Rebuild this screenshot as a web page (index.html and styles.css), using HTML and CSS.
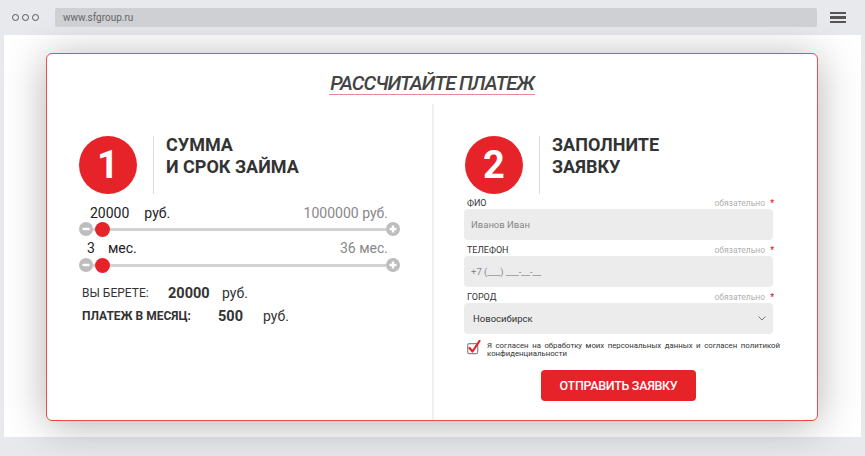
FILE: index.html
```html
<!DOCTYPE html>
<html lang="ru">
<head>
 <meta charset="utf-8">
 <title>SF Group — рассчитайте платеж</title>
 <link rel="stylesheet" href="styles.css">
</head>
<body>

 <div class="browser-bar">
 <div class="dots"><span></span><span></span><span></span></div>
 <div class="url">www.sfgroup.ru</div>
 <div class="burger"><span></span><span></span><span></span></div>
 </div>

 <div class="page">
 <div class="card">
 <div class="card-head">
 <h1 class="title">РАССЧИТАЙТЕ ПЛАТЕЖ</h1>
 </div>

 <div class="cols">
 <div class="col col-left">
 <div class="step">
 <div class="step-num">1</div>
 <div class="step-line"></div>
 <div class="step-title">СУММА<br>И СРОК ЗАЙМА</div>
 </div>

 <div class="slider">
 <div class="slider-labels">
 <span class="slider-val val-sum">20000</span>
 <span class="slider-unit unit-sum">руб.</span>
 <span class="slider-max">1000000 руб.</span>
 </div>
 <div class="slider-row">
 <svg class="slider-btn" width="14" height="14" viewBox="0 0 14 14"><circle cx="7" cy="7" r="7" fill="#bdbdbd"/><rect x="3.5" y="5.8" width="7" height="2.4" fill="#fff"/></svg>
 <div class="track"><span class="thumb"></span></div>
 <svg class="slider-btn" width="14" height="14" viewBox="0 0 14 14"><circle cx="7" cy="7" r="7" fill="#bdbdbd"/><rect x="3.5" y="5.8" width="7" height="2.4" fill="#fff"/><rect x="5.8" y="3.5" width="2.4" height="7" fill="#fff"/></svg>
 </div>
 </div>

 <div class="slider slider-term">
 <div class="slider-labels">
 <span class="slider-val val-term">3</span>
 <span class="slider-unit unit-term">мес.</span>
 <span class="slider-max">36 мес.</span>
 </div>
 <div class="slider-row">
 <svg class="slider-btn" width="14" height="14" viewBox="0 0 14 14"><circle cx="7" cy="7" r="7" fill="#bdbdbd"/><rect x="3.5" y="5.8" width="7" height="2.4" fill="#fff"/></svg>
 <div class="track"><span class="thumb"></span></div>
 <svg class="slider-btn" width="14" height="14" viewBox="0 0 14 14"><circle cx="7" cy="7" r="7" fill="#bdbdbd"/><rect x="3.5" y="5.8" width="7" height="2.4" fill="#fff"/><rect x="5.8" y="3.5" width="2.4" height="7" fill="#fff"/></svg>
 </div>
 </div>

 <div class="summary">
 <div class="sum-row">
 <span class="sum-label">ВЫ БЕРЕТЕ:</span>
 <span class="sum-val">20000</span>
 <span class="sum-unit">руб.</span>
 </div>
 <div class="sum-row sum-row-pay">
 <span class="sum-label">ПЛАТЕЖ В МЕСЯЦ:</span>
 <span class="sum-val">500</span>
 <span class="sum-unit">руб.</span>
 </div>
 </div>
 </div>

 <div class="col col-right">
 <div class="step">
 <div class="step-num">2</div>
 <div class="step-line"></div>
 <div class="step-title">ЗАПОЛНИТЕ<br>ЗАЯВКУ</div>
 </div>

 <form class="form">
 <div class="field field-first">
 <div class="field-head"><span class="field-name">ФИО</span><span class="field-req">обязательно <b>*</b></span></div>
 <input class="field-input" type="text" placeholder="Иванов Иван">
 </div>
 <div class="field">
 <div class="field-head"><span class="field-name">ТЕЛЕФОН</span><span class="field-req">обязательно <b>*</b></span></div>
 <input class="field-input" type="text" placeholder="+7 (___) ___-__-__">
 </div>
 <div class="field">
 <div class="field-head"><span class="field-name">ГОРОД</span><span class="field-req">обязательно <b>*</b></span></div>
 <div class="field-input field-select">
 <span>Новосибирск</span>
 <svg width="8" height="5" viewBox="0 0 8 5"><path d="M0.5 0.5 L4 4 L7.5 0.5" fill="none" stroke="#777" stroke-width="1"/></svg>
 </div>
 </div>

 <div class="agree">
 <svg class="agree-box" width="14" height="15" viewBox="0 0 14 15">
 <rect x="0.7" y="3.7" width="10" height="10" rx="1.5" fill="none" stroke="#888" stroke-width="1.2"/>
 <path d="M2.5 8 L5.5 11.5 L12.5 1" fill="none" stroke="#e52329" stroke-width="2.2" stroke-linecap="round" stroke-linejoin="round"/>
 </svg>
 <p class="agree-text">Я согласен на обработку моих персональных данных и согласен политикой конфиденциальности</p>
 </div>

 <div class="submit-wrap">
 <button class="submit-btn" type="button">ОТПРАВИТЬ ЗАЯВКУ</button>
 </div>
 </form>
 </div>
 </div>
 </div>
 </div>

</body>
</html>
```

FILE: styles.css
```css
body {
 margin: 0;
 padding: 0;
 background: #e8e9ec;
 font-family: Roboto, "Noto Sans", Arial, sans-serif;
 color: #333;
 width: 865px;
 height: 456px;
 overflow: hidden;
}

/* browser chrome */
.browser-bar {
 height: 35px;
 display: flex;
 align-items: center;
}

.dots {
 display: flex;
 gap: 3px;
 margin-left: 12px;
 width: 43px;
}

.dots span {
 width: 5px;
 height: 5px;
 border: 1.6px solid #555;
 border-radius: 50%;
}

.url {
 width: 762px;
 height: 19px;
 margin-top: -1px;
 background: #ced0d4;
 border-radius: 2px;
 font-size: 10px;
 line-height: 19px;
 color: #666;
 padding-left: 8px;
 box-sizing: border-box;
}

.burger {
 margin-left: 13px;
 display: flex;
 flex-direction: column;
 gap: 2px;
}

.burger span {
 width: 16px;
 height: 2.5px;
 background: #555;
}

/* page */
.page {
 margin: 0 4px;
 height: 402px;
 background: #fff;
 padding: 18px 0 0 42px;
 box-sizing: border-box;
}

.card {
 width: 772px;
 height: 368px;
 box-sizing: border-box;
 border: 1px solid #ee4a50;
 border-radius: 6px;
 background: #fff;
 box-shadow: 0 4px 42px rgba(0, 0, 0, 0.3);
 display: flex;
 flex-direction: column;
}

.card-head {
 height: 50px;
 padding-top: 18px;
 box-sizing: border-box;
 text-align: center;
}

.title {
 display: inline-block;
 margin: 0;
 font-size: 20px;
 line-height: 22px;
 font-style: italic;
 font-weight: 500;
 letter-spacing: -1px;
 color: #444;
 border-bottom: 1px solid #ec8a8e;
 padding: 0 1px;
}

.cols {
 flex: 1;
 display: flex;
}

.col-left {
 width: 385px;
 padding-left: 32px;
 box-sizing: border-box;
}

.col-right {
 flex: 1;
 border-left: 2px solid #f0f0f0;
 padding-left: 30px;
}

/* step header */
.step {
 display: flex;
 align-items: flex-start;
 margin-top: 32px;
}

.col-right .step {
 margin-left: 1px;
}

.step-num {
 width: 58px;
 height: 58px;
 border-radius: 50%;
 background: #e52329;
 color: #fff;
 font-size: 38px;
 font-weight: 700;
 line-height: 58px;
 text-align: center;
}

.step-line {
 width: 1px;
 height: 58px;
 background: #ddd;
 margin-left: 16px;
}

.step-title {
 margin-left: 12px;
 margin-top: -2px;
 font-size: 18px;
 line-height: 22px;
 font-weight: 700;
 color: #333;
}

/* sliders */
.slider {
 width: 321px;
 margin-top: 10px;
}

.slider-term {
 margin-top: 3px;
}

.slider-labels {
 display: flex;
 height: 18px;
 line-height: 18px;
 font-size: 14px;
 color: #222;
}

.slider-term .slider-labels {
 height: 19px;
}

.val-sum { margin-left: 11px; }
.unit-sum { margin-left: 15px; }
.val-term { margin-left: 8px; }
.unit-term { margin-left: 13px; }

.slider-max {
 margin-left: auto;
 margin-right: 12px;
 color: #888;
}

.slider-row {
 display: flex;
 align-items: center;
 height: 14px;
}

.track {
 flex: 1;
 height: 3px;
 background: #d2d2d2;
 position: relative;
}

.thumb {
 position: absolute;
 left: 2px;
 top: -6px;
 width: 15px;
 height: 15px;
 border-radius: 50%;
 background: #e52329;
}

/* summary */
.summary {
 margin-top: 10px;
 padding-left: 3px;
}

.sum-row {
 height: 23px;
 line-height: 23px;
 display: flex;
}

.sum-label {
 font-size: 12px;
 color: #333;
 width: 86px;
}

.sum-val {
 font-size: 14.5px;
 font-weight: 700;
 color: #333;
 width: 54px;
}

.sum-unit {
 font-size: 14px;
 color: #333;
}

.sum-row-pay .sum-label {
 font-weight: 700;
 width: 136px;
}

.sum-row-pay .sum-val {
 width: 45px;
}

/* form */
.form {
 width: 309px;
 margin: 0;
}

.field {
 margin-top: 4px;
}

.field-first {
 margin-top: 3px;
}

.field-head {
 display: flex;
 justify-content: space-between;
 height: 12px;
 line-height: 12px;
 padding: 0 0 0 3px;
}

.field-name {
 font-size: 9px;
 color: #333;
}

.field-req {
 font-size: 8.5px;
 color: #b0b0b0;
 margin-right: -1px;
}

.field-req b {
 color: #e52329;
 margin-left: 3px;
}

.field-input {
 display: block;
 width: 100%;
 height: 31px;
 box-sizing: border-box;
 border: none;
 border-radius: 4px;
 background: #ececec;
 padding: 0 7px;
 font-family: inherit;
 font-size: 9.5px;
 color: #333;
 outline: none;
}

.field-input::placeholder {
 color: #888;
}

.field-select {
 display: flex;
 align-items: center;
 justify-content: space-between;
 padding: 0 7px 0 9px;
}

.agree {
 display: flex;
 align-items: flex-start;
 margin-top: 6px;
 padding-left: 3px;
}

.agree-box {
 flex: none;
}

.agree-text {
 margin: 2px 0 0 6px;
 width: 293px;
 flex: none;
 font-size: 7.8px;
 line-height: 8px;
 color: #333;
 text-align: justify;
}

.submit-wrap {
 text-align: center;
 margin-top: 12px;
}

.submit-btn {
 width: 155px;
 height: 31px;
 border: none;
 border-radius: 4px;
 background: #e52329;
 color: #fff;
 font-family: inherit;
 font-size: 12.5px;
 font-weight: 500;
 letter-spacing: -0.3px;
 cursor: pointer;
}
```
